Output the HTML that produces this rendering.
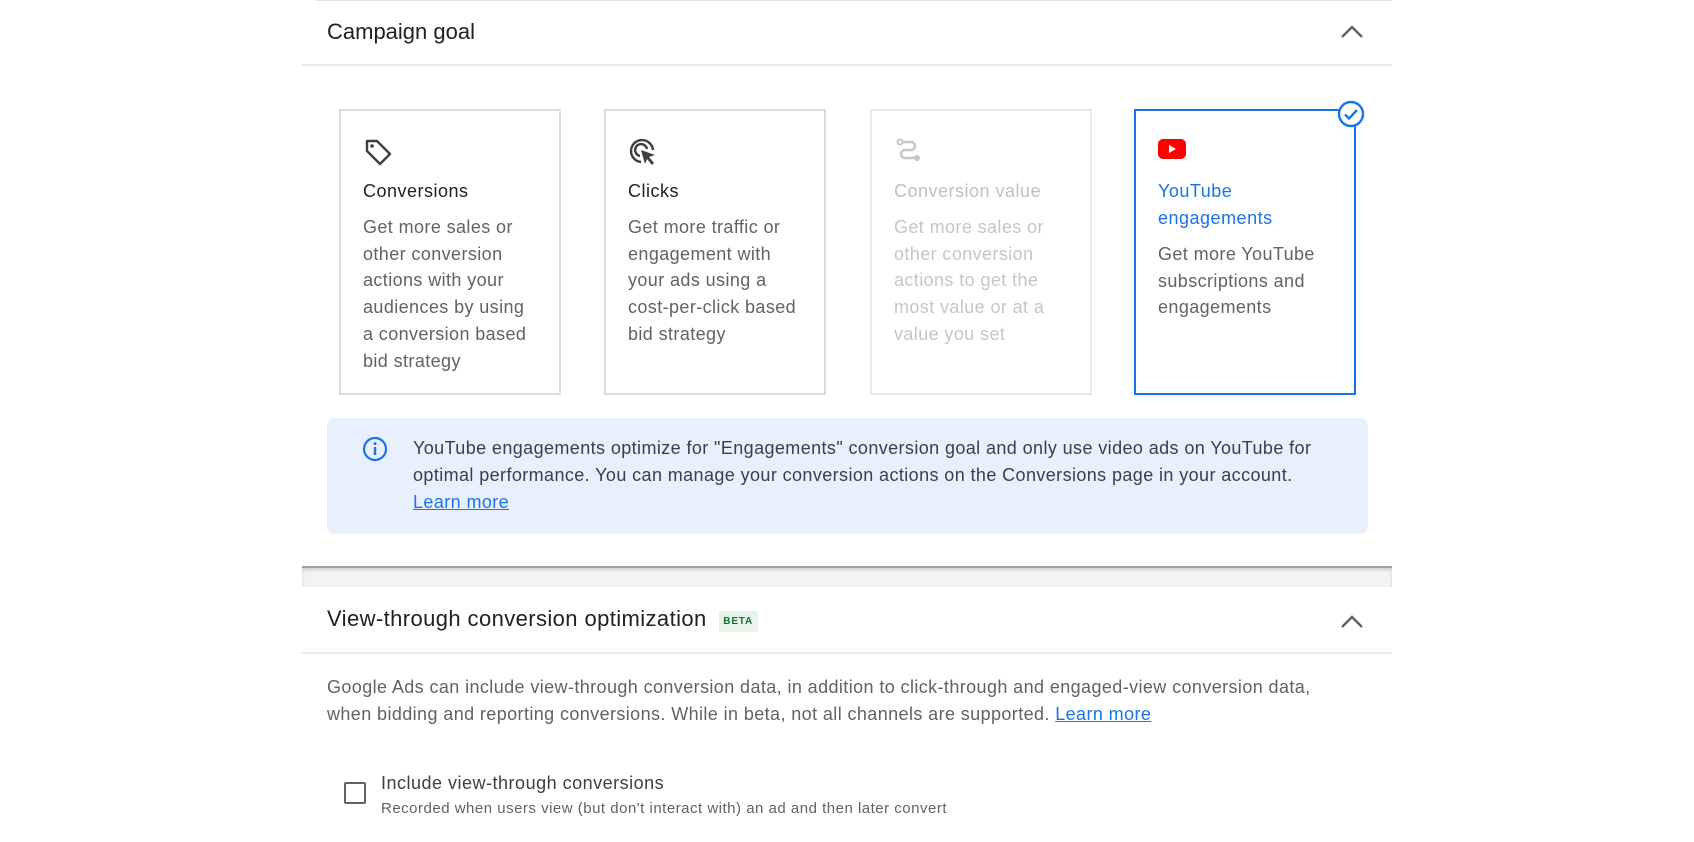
<!DOCTYPE html>
<html><head><meta charset="utf-8"><style>
*{margin:0;padding:0;box-sizing:border-box}
body{width:1694px;height:842px;background:#fff;font-family:"Liberation Sans",Arial,sans-serif;position:relative;overflow:hidden;color:#3c4043}
.a{position:absolute}
.card{position:absolute;top:109px;width:222px;height:286px;border:2px solid #dadce0}
.card .ic{position:absolute;left:22px;top:26px}
.card .t{position:absolute;left:22px;top:67px;font-size:18px;letter-spacing:.5px;color:#202124;line-height:27px;white-space:nowrap}
.card .d{position:absolute;left:22px;top:103px;font-size:18px;letter-spacing:.4px;line-height:26.7px;color:#5f6368;white-space:nowrap}
.link{color:#1a73e8;text-decoration:underline}
.p{font-size:18px;letter-spacing:.4px;line-height:27px;white-space:nowrap}
</style></head><body>
<div class="a" style="left:316px;top:0;width:1076px;height:1px;background:#e0e0e0"></div>
<div class="a" style="left:327px;top:19px;font-size:22px;color:#202124">Campaign goal</div>
<svg class="a" style="left:1340px;top:24px" width="24" height="16" viewBox="0 0 24 16"><path d="M2 13 L12 3 L22 13" fill="none" stroke="#5f6368" stroke-width="2.4"/></svg>
<div class="a" style="left:302px;top:64px;width:1090px;height:2px;background:#e8eaed"></div>

<div class="card" style="left:339px">
<svg class="ic" width="30" height="30" viewBox="0 0 30 30"><path d="M4 4 L14 4 L27 17 L17 27 L4 14 Z" fill="none" stroke="#3c4043" stroke-width="2.4" stroke-linejoin="round"/><circle cx="9" cy="9" r="1.8" fill="#3c4043"/></svg>
<div class="t">Conversions</div>
<div class="d">Get more sales or<br>other conversion<br>actions with your<br>audiences by using<br>a conversion based<br>bid strategy</div></div>

<div class="card" style="left:604px">
<svg class="ic" width="30" height="30" viewBox="0 0 30 30"><path d="M13 25 A11 11 0 1 1 25 13" fill="none" stroke="#3c4043" stroke-width="2.4"/><path d="M12 19 A6 6 0 1 1 19 12" fill="none" stroke="#3c4043" stroke-width="2.4"/><path d="M13 13 L27 18 L21 20 L26 26 L24 28 L19 22 L17 27 Z" fill="#3c4043"/></svg>
<div class="t">Clicks</div>
<div class="d">Get more traffic or<br>engagement with<br>your ads using a<br>cost-per-click based<br>bid strategy</div></div>

<div class="card" style="left:870px;border-color:#e8eaed">
<svg class="ic" width="30" height="30" viewBox="0 0 30 30"><circle cx="6" cy="5" r="2.5" fill="none" stroke="#c4c7c5" stroke-width="2"/><path d="M8 5 H17 A4 4 0 0 1 17 13 H11 A4 4 0 0 0 11 21 H22" fill="none" stroke="#c4c7c5" stroke-width="2.4"/><circle cx="23" cy="21" r="3" fill="#c4c7c5"/></svg>
<div class="t" style="color:#bdc1c6">Conversion value</div>
<div class="d" style="color:#c4c7c5">Get more sales or<br>other conversion<br>actions to get the<br>most value or at a<br>value you set</div></div>

<div class="card" style="left:1134px;border-color:#1a73e8">
<svg class="ic" style="top:28px" width="28" height="20" viewBox="0 0 28 20"><rect x="0" y="0" width="28" height="20" rx="5" fill="#ff0000"/><path d="M11 6 L18 10 L11 14Z" fill="#fff"/></svg>
<div class="t" style="color:#1a73e8">YouTube<br>engagements</div>
<div class="d" style="top:130px">Get more YouTube<br>subscriptions and<br>engagements</div></div>
<svg class="a" style="left:1337px;top:100px" width="28" height="28" viewBox="0 0 28 28"><circle cx="14" cy="14" r="12" fill="#fff" stroke="#1a73e8" stroke-width="2.4"/><path d="M8 14.5 L12 18.5 L20 10" fill="none" stroke="#1a73e8" stroke-width="2.4"/></svg>

<div class="a" style="left:327px;top:418px;width:1041px;height:116px;background:#e8f0fe;border-radius:8px"></div>
<svg class="a" style="left:362px;top:436px" width="26" height="26" viewBox="0 0 26 26"><circle cx="13" cy="13" r="11" fill="none" stroke="#1a73e8" stroke-width="2.2"/><rect x="11.8" y="11" width="2.4" height="8" fill="#1a73e8"/><circle cx="13" cy="7.6" r="1.5" fill="#1a73e8"/></svg>
<div class="a p" style="left:413px;top:435px;color:#3c4043">YouTube engagements optimize for "Engagements" conversion goal and only use video ads on YouTube for<br>optimal performance. You can manage your conversion actions on the Conversions page in your account.<br><span class="link">Learn more</span></div>

<div class="a" style="left:302px;top:566px;width:1090px;height:21px;background:#f1f3f4;border-top:2px solid #9aa0a6;box-shadow:inset 0 2px 3px rgba(0,0,0,.15)"></div>

<div class="a" style="left:327px;top:606px;font-size:22px;letter-spacing:.4px;color:#202124;white-space:nowrap">View-through conversion optimization<span style="display:inline-block;vertical-align:2px;margin-left:12px;width:39px;height:21px;background:#e6f4ea;color:#137333;font-size:10px;font-weight:bold;letter-spacing:.8px;text-align:center;line-height:21px;border-radius:2px">BETA</span></div>
<svg class="a" style="left:1340px;top:614px" width="24" height="16" viewBox="0 0 24 16"><path d="M2 13 L12 3 L22 13" fill="none" stroke="#5f6368" stroke-width="2.4"/></svg>
<div class="a" style="left:302px;top:652px;width:1090px;height:2px;background:#e8eaed"></div>

<div class="a p" style="left:327px;top:674px;color:#5f6368">Google Ads can include view-through conversion data, in addition to click-through and engaged-view conversion data,<br>when bidding and reporting conversions. While in beta, not all channels are supported. <span class="link">Learn more</span></div>

<div class="a" style="left:344px;top:782px;width:22px;height:22px;border:2.4px solid #5f6368;border-radius:2px"></div>
<div class="a" style="left:381px;top:773px;font-size:18px;letter-spacing:.5px;color:#3c4043">Include view-through conversions</div>
<div class="a" style="left:381px;top:800px;font-size:15px;letter-spacing:.5px;color:#5f6368;white-space:nowrap">Recorded when users view (but don't interact with) an ad and then later convert</div>
</body></html>
